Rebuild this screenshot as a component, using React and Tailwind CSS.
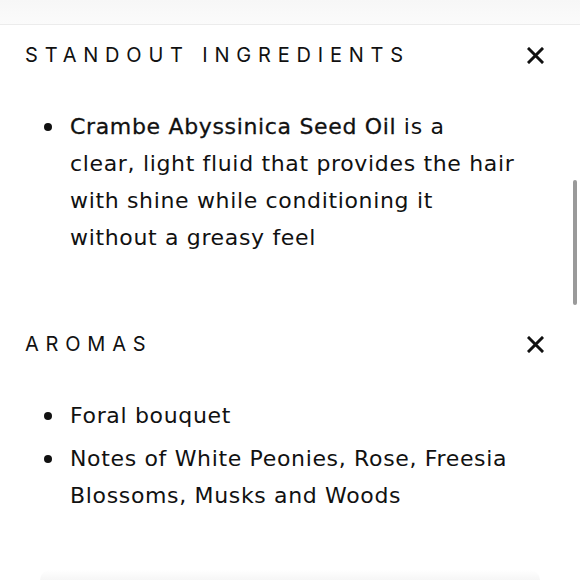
import React from "react";

function XIcon() {
  return (
    <svg width="17" height="17" viewBox="0 0 17 17" className="shrink-0">
      <path d="M2 2 L15 15 M15 2 L2 15" stroke="#111" strokeWidth="3" strokeLinecap="square" fill="none" />
    </svg>
  );
}

function Heading({ children }) {
  return (
    <div className="h-[60px] flex items-center justify-between pl-[25px] pr-[36px]">
      <span
        className="text-[20px] tracking-[0.34em] text-[#111] font-normal"
        style={{ fontFamily: "Inter, sans-serif" }}
      >
        {children}
      </span>
      <XIcon />
    </div>
  );
}

function Item({ children }) {
  return (
    <li className="flex">
      <span className="w-[70px] shrink-0 flex justify-end pr-[18px] h-[37px] items-center">
        <span className="block w-[8px] h-[8px] rounded-full bg-[#111]" />
      </span>
      <span className="flex-1">{children}</span>
    </li>
  );
}

export default function App() {
  return (
    <div
      className="relative w-[580px] h-[580px] bg-white overflow-hidden text-[#111]"
      style={{ fontFamily: "'DejaVu Sans', sans-serif" }}
    >
      <div className="h-[25px] bg-gradient-to-b from-[#f7f7f7] to-[#fbfbfb] border-b border-[#ececec]" />
      <Heading>STANDOUT INGREDIENTS</Heading>
      <ul className="mt-[23px] pr-[20px] text-[22px] leading-[37px] tracking-[0.03em] whitespace-nowrap">
        <Item>
          <span className="[-webkit-text-stroke:0.3px_#111]">Crambe Abyssinica Seed Oil</span> is a
          <br />
          clear, light fluid that provides the hair
          <br />
          with shine while conditioning it
          <br />
          without a greasy feel
        </Item>
      </ul>
      <div className="h-[58px]" />
      <Heading>AROMAS</Heading>
      <ul className="mt-[23px] pr-[20px] text-[22px] leading-[37px] tracking-[0.03em] whitespace-nowrap flex flex-col gap-[6px]">
        <Item>Foral bouquet</Item>
        <Item>
          Notes of White Peonies, Rose, Freesia
          <br />
          Blossoms, Musks and Woods
        </Item>
      </ul>
      <div className="absolute left-[40px] right-[40px] bottom-0 h-[10px] bg-gradient-to-b from-white to-[#f6f6f6] rounded-t-full" />
      <div className="absolute right-[3px] top-[180px] w-[4px] h-[125px] bg-[#9a9a9a] rounded-sm" />
    </div>
  );
}
